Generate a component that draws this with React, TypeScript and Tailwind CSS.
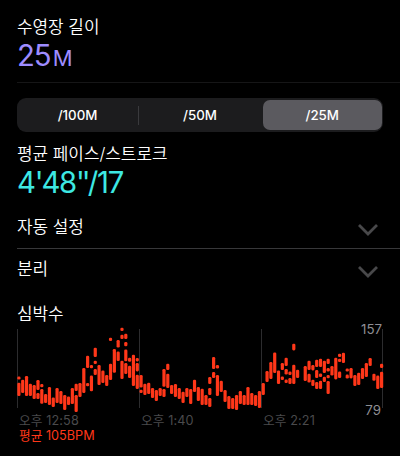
type Range = [top: number, bottom: number];

const FONT = "font-['Inter','Noto_Sans_CJK_KR',sans-serif]";

// One entry per time slot, each holding the vertical spans drawn in that slot.
const HEART_RATE: Range[][] = [
  [[376.5, 379.5], [382.7, 396]],
  [[379.7, 393]],
  [[376, 396]],
  [[383.7, 396]],
  [[385, 399]],
  [[380, 390], [393, 399]],
  [[384, 387.3], [389, 403.7]],
  [[394, 403]],
  [[387, 405]],
  [[397.5, 407]],
  [[388, 403]],
  [[391, 404]],
  [[395, 410]],
  [[396.5, 405]],
  [[388, 404]],
  [[383.7, 391], [395, 412]],
  [[383, 397]],
  [[368, 393]],
  [[355.7, 368], [383, 386.2]],
  [[365, 368.2], [375.6, 391.3]],
  [[347.7, 357], [360.8, 364], [369, 375]],
  [[365, 385]],
  [[370.5, 383]],
  [[375, 386]],
  [[337.8, 341], [363.7, 380]],
  [[349, 372.7]],
  [[340, 347.6], [351.4, 361]],
  [[327.8, 331], [334.7, 339], [360.7, 379]],
  [[333.7, 339], [342, 346.3], [349.4, 361.3], [363, 374]],
  [[357.7, 361.7], [365.7, 378]],
  [[354.7, 386]],
  [[358, 361.4], [363, 371.4], [374.7, 389]],
  [[375, 387.6], [389.8, 393]],
  [[383.7, 395]],
  [[382.7, 394]],
  [[388, 398]],
  [[390, 401]],
  [[388, 396]],
  [[369, 386.7], [389, 397]],
  [[363.7, 370], [373.7, 388]],
  [[385, 394]],
  [[384, 397]],
  [[388, 399]],
  [[391.7, 403]],
  [[388, 397]],
  [[389, 404]],
  [[379.7, 392]],
  [[387, 401]],
  [[388.7, 405]],
  [[395, 405]],
  [[377, 384], [388, 395], [398, 407]],
  [[357, 369], [372, 378]],
  [[365, 368.5], [375, 396]],
  [[380.7, 392]],
  [[390, 402]],
  [[396, 409]],
  [[398, 409]],
  [[395, 410]],
  [[391, 404]],
  [[395, 405]],
  [[387, 405]],
  [[393, 405]],
  [[395, 406]],
  [[391, 408]],
  [[383, 395]],
  [[371, 382]],
  [[362, 379]],
  [[352.4, 373]],
  [[370.4, 384]],
  [[363, 370], [376.4, 380]],
  [[357.7, 366], [369, 374.6], [379.4, 383]],
  [[371.4, 375], [378, 384]],
  [[343.7, 350.4], [364.7, 384]],
  [[369.7, 378]],
  [],
  [[366, 381]],
  [[360.7, 370], [373.7, 382.6]],
  [[365, 370.4], [379.7, 386]],
  [[359.7, 367], [370, 378], [382, 389]],
  [[358.7, 367], [373.4, 377], [380.7, 389]],
  [[360.7, 373], [376.7, 382]],
  [[358.7, 364], [368, 371.5], [375, 378.3], [381, 394]],
  [[366, 375.6]],
  [[357.7, 379.4]],
  [[353.7, 357], [358.7, 362], [371.4, 378]],
  [[352.7, 363]],
  [[368.4, 371.6], [374.6, 378.6]],
  [[368, 378.4]],
  [[375, 386]],
  [[372.7, 385]],
  [[368, 379]],
  [[363, 377]],
  [[358, 366]],
  [[373.7, 380.7]],
  [[375.6, 389]],
  [[363.7, 368], [371.7, 388]],
];

const SLOT_WIDTH = 3.818;
const FIRST_SLOT = 18.9;
const GRID_LINES = [17.5, 139.5, 261.5, 382.5];

const UNITS = ['/100M', '/50M', '/25M'];
const TIMES = ['오후 12:58', '오후 1:40', '오후 2:21'];

function Label({ children }: { children: string }) {
  return (
    <div className="h-6 whitespace-pre text-[16.9px] leading-6 font-[350] text-white">{children}</div>
  );
}

function UnitPicker() {
  return (
    <div className="mt-[15px] flex h-[34px] w-[366px] items-center rounded-[9px] bg-[#1c1c1e] text-[13.3px] font-medium text-white">
      {UNITS.map((unit, i) => (
        <div key={unit} className="flex h-full flex-1 items-center">
          <div
            className={
              i === 2
                ? 'mr-[1.5px] ml-[2px] flex h-[30px] flex-1 items-center justify-center rounded-[7px] bg-[#5b5a5f] pt-px'
                : 'flex h-[30px] flex-1 items-center justify-center pt-px'
            }
          >
            {unit}
          </div>
          {i === 0 && <div className="h-[19px] w-px bg-[#3a3a3d]" />}
        </div>
      ))}
    </div>
  );
}

function DisclosureRow({ title }: { title: string }) {
  return (
    <div className="flex items-center justify-between pr-[5px]">
      <Label>{title}</Label>
      <svg className="mt-[5px]" width="20" height="12" viewBox="0 0 20 12" fill="none">
        <path d="M1 1L10 10L19 1" stroke="#48484a" strokeWidth="2.8" />
      </svg>
    </div>
  );
}

function HeartRateChart() {
  return (
    <div className="relative h-[87px] w-[366px]">
      <svg className="overflow-visible" width="366" height="88" viewBox="17 326 366 88">
        {GRID_LINES.map((x) => (
          <line key={x} x1={x} x2={x} y1="329" y2="408" stroke="#2c2c2e" />
        ))}
        {HEART_RATE.map((ranges, i) =>
          ranges.map(([top, bottom]) => (
            <rect
              key={`${i}-${top}`}
              x={FIRST_SLOT + i * SLOT_WIDTH - 1.6}
              y={top}
              width="3.2"
              height={bottom - top}
              rx="1.3"
              fill="#ff3719"
            />
          )),
        )}
      </svg>
      <span className="absolute top-[-5px] right-[1px] text-[13.3px] leading-4 text-[#8e8e93]">157</span>
      <span className="absolute top-[76px] right-[2px] text-[13.3px] leading-4 text-[#8e8e93]">79</span>
    </div>
  );
}

export default function App() {
  return (
    <main className={`h-[456px] w-[400px] overflow-hidden bg-black pl-[17px] ${FONT}`}>
      <div className="pt-[15px]">
        <Label>수영장 길이</Label>
        <div className="flex h-8 items-baseline pt-px text-[29.3px] leading-8 tracking-[-1px] text-[#9e8cff]">
          25<span className="ml-[2px] text-[22px]">M</span>
        </div>
      </div>
      <div className="mt-[11px] h-px bg-[#161617]" />
      <UnitPicker />
      <div className="mt-[10px]">
        <Label>평균 페이스/스트로크</Label>
        <div className="h-8 pt-px text-[29.3px] leading-8 tracking-[-1.3px] text-[#3de8e3]">
          4<span className="tracking-[-2px]">'</span>48
          <span className="tracking-[-2.8px]">''</span>/17
        </div>
      </div>
      <div className="mt-[17px] w-[366px]">
        <DisclosureRow title="자동 설정" />
      </div>
      <div className="mt-[9px] h-px bg-[#38383a]" />
      <div className="mt-[8px] w-[366px]">
        <DisclosureRow title="분리" />
      </div>
      <div className="mt-[21px]">
        <Label>심박수</Label>
      </div>
      <HeartRateChart />
      <div className="grid h-[15px] w-[366px] grid-cols-3 text-[12.7px] leading-[15px] tracking-[0.1px] text-[#4a4a4c]">
        {TIMES.map((time) => (
          <span key={time} className="pl-[2px]">{time}</span>
        ))}
      </div>
      <div className="pl-[2px] text-[12.7px] leading-[15px] text-[#ff3719]">평균 105BPM</div>
    </main>
  );
}
